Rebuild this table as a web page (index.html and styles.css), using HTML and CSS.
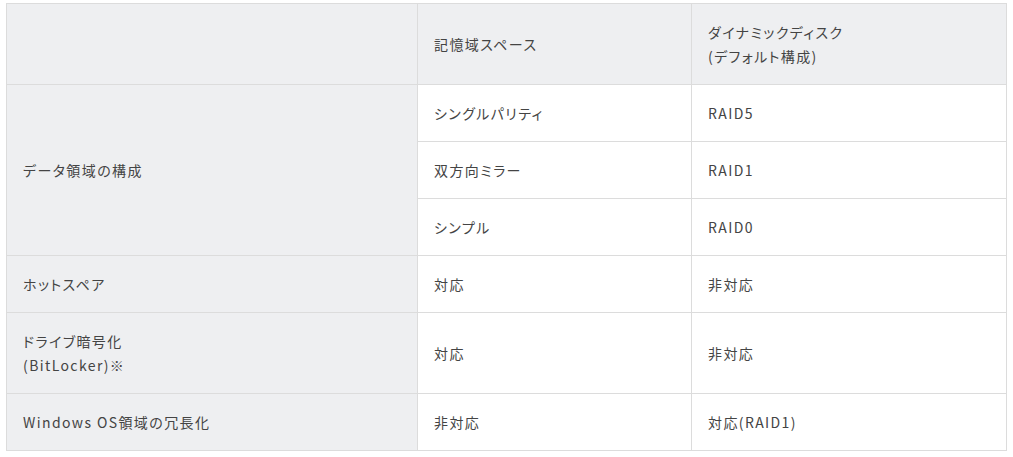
FILE: index.html
```html
<!DOCTYPE html>
<html lang="ja">
<head>
<meta charset="utf-8">
<link rel="stylesheet" href="styles.css">
</head>
<body>
<table class="spec">
  <colgroup>
    <col class="c1"><col class="c2"><col class="c3">
  </colgroup>
  <thead>
    <tr>
      <th class="head"></th>
      <th class="head">記憶域スペース</th>
      <th class="head">ダイナミックディスク<br>(デフォルト構成)</th>
    </tr>
  </thead>
  <tbody>
    <tr>
      <th class="label" rowspan="3">データ領域の構成</th>
      <td>シングルパリティ</td>
      <td>RAID5</td>
    </tr>
    <tr>
      <td>双方向ミラー</td>
      <td>RAID1</td>
    </tr>
    <tr>
      <td>シンプル</td>
      <td>RAID0</td>
    </tr>
    <tr>
      <th class="label">ホットスペア</th>
      <td>対応</td>
      <td>非対応</td>
    </tr>
    <tr>
      <th class="label">ドライブ暗号化<br>(BitLocker)※</th>
      <td>対応</td>
      <td>非対応</td>
    </tr>
    <tr>
      <th class="label">Windows OS領域の冗長化</th>
      <td>非対応</td>
      <td>対応(RAID1)</td>
    </tr>
  </tbody>
</table>
</body>
</html>
```

FILE: styles.css
```css
html, body {
  background: #ffffff;
}
body {
  margin: 3px 0 0 6px;
  font-family: "Noto Sans CJK JP", "Noto Sans", sans-serif;
  font-size: 14px;
  color: #444444;
  letter-spacing: 0.1em;
  font-feature-settings: "palt";
}
.spec {
  border-collapse: collapse;
  table-layout: fixed;
  width: 1000px;
}
.c1 { width: 411px; }
.c2 { width: 274px; }
.c3 { width: 315px; }
.spec th,
.spec td {
  border: 1px solid #dcdcdc;
  padding: 16px;
  line-height: 24px;
  text-align: left;
  vertical-align: middle;
  font-weight: 400;
}
.spec .head,
.spec .label {
  background: #eeeff1;
}
```
